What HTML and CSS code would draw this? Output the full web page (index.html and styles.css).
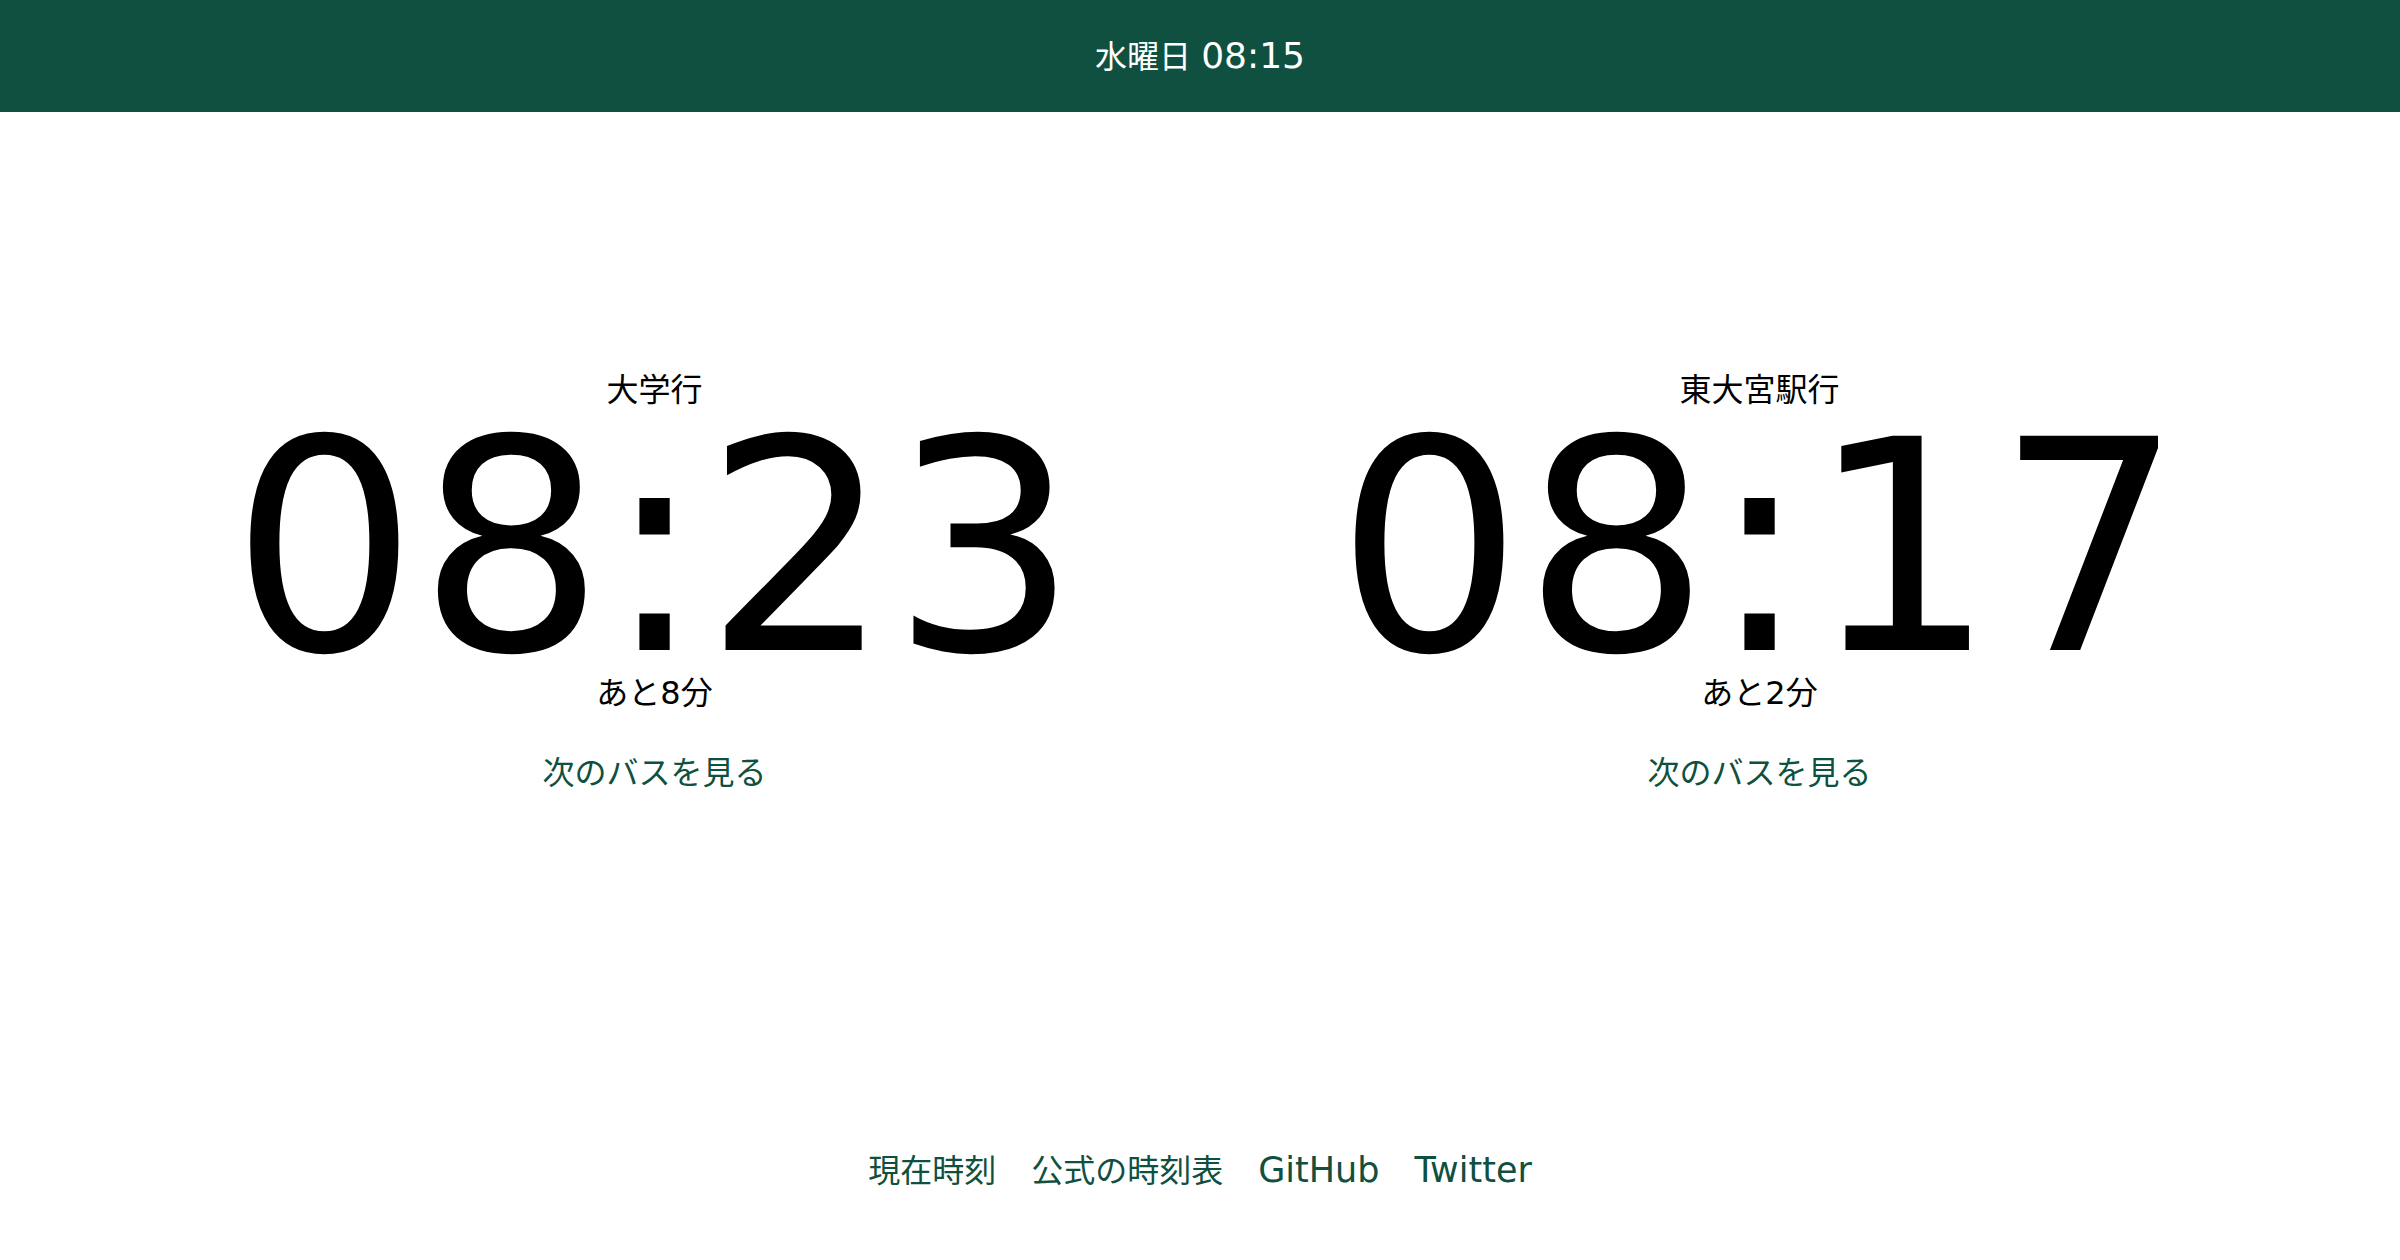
FILE: index.html
```html
<!DOCTYPE html>
<html lang="ja">
<head>
<meta charset="utf-8">
<title>バス時刻</title>
<link rel="stylesheet" href="styles.css">
</head>
<body>
<header class="topbar"><span class="day">水曜日</span> <span class="clock">08:15</span></header>
<main class="boards">
  <section class="board">
    <div class="dest">大学行</div>
    <div class="time">08:23</div>
    <div class="remain">あと8分</div>
    <a class="next" href="#">次のバスを見る</a>
  </section>
  <section class="board">
    <div class="dest">東大宮駅行</div>
    <div class="time">08:17</div>
    <div class="remain">あと2分</div>
    <a class="next" href="#">次のバスを見る</a>
  </section>
</main>
<footer class="links">
  <a href="#">現在時刻</a>
  <a href="#">公式の時刻表</a>
  <a class="latin" href="#">GitHub</a>
  <a class="latin" href="#">Twitter</a>
</footer>
</body>
</html>
```
FILE: styles.css
```css
html, body {
  margin: 0;
  padding: 0;
  height: 100%;
}
body {
  font-family: "DejaVu Sans", "Noto Sans CJK JP", sans-serif;
  color: #000;
  background: #fff;
  display: flex;
  flex-direction: column;
}
.topbar {
  height: 112px;
  line-height: 112px;
  background: #0f5040;
  color: #fff;
  font-size: 32px;
  text-align: center;
}
.topbar .clock {
  font-size: 36px;
}
.boards {
  flex: 1;
  display: grid;
  grid-template-columns: repeat(2, 1fr);
  align-items: start;
  padding: 259px 88px 0 102px;
}
.board {
  display: flex;
  flex-direction: column;
  align-items: center;
}
.dest, .remain, .next {
  font-size: 32px;
  line-height: 38px;
}
.time {
  font-size: 294px;
  line-height: 0.8;
  margin: 22px 0 8px;
}
.next {
  margin-top: 42px;
  color: #0f5040;
  text-decoration: none;
}
.links {
  display: flex;
  justify-content: center;
  align-items: baseline;
  gap: 35px;
  padding-bottom: 70px;
  font-size: 32px;
  line-height: 38px;
}
.links a {
  color: #0f5040;
  text-decoration: none;
}
.links .latin {
  font-size: 35px;
}
```
